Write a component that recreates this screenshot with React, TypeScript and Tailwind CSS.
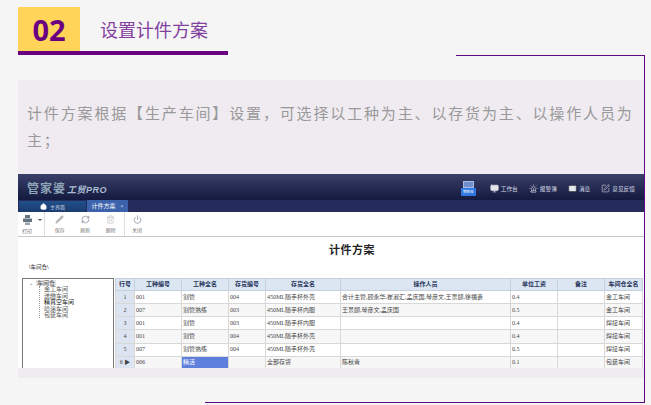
import { Home, Pencil, RefreshCw, Trash2, Power, Monitor, Mail, SquarePen, Siren } from "lucide-react";

const cjk = "font-['Liberation_Sans','Noto_Sans_CJK_SC',sans-serif]";

const rows = [
  ["1", "001", "割管", "004", "450ML随手杯外壳", "合计主管,顾永华,崔淑汇,孟庆国,琴彦文,王景頠,徐福贵", "0.4", "", "金工车间"],
  ["2", "007", "割管熟练", "003", "450ML随手杯内胆", "王景頠,琴彦文,孟庆国", "0.5", "", "金工车间"],
  ["3", "001", "割管", "003", "450ML随手杯内胆", "", "0.4", "", "焊接车间"],
  ["4", "001", "割管", "004", "450ML随手杯外壳", "", "0.4", "", "焊接车间"],
  ["5", "007", "割管熟练", "004", "450ML随手杯外壳", "", "0.5", "", "焊接车间"],
  ["6", "006", "精活", "", "全部存货", "陈秋青", "0.1", "", "包装车间"],
];

const headers = ["行号", "工种编号", "工种全名", "存货编号", "存货全名", "操作人员", "单位工资", "备注", "车间仓全名"];

function PrinterIcon() {
  return (
    <svg width="11" height="10" viewBox="0 0 11 10" fill="#65727f">
      <rect x="3" y="0" width="5" height="3" />
      <rect x="1" y="3.5" width="9" height="3.5" rx="0.5" />
      <rect x="3" y="7.5" width="5" height="2.5" fill="#9aa5af" />
    </svg>
  );
}

function ToolButton({ icon, label, dim, className }: { icon: React.ReactNode; label: string; dim?: boolean; className: string }) {
  return (
    <div className={`flex flex-col items-center gap-[3px] ${className} ${dim ? "text-[#b4b4b4]" : "text-[#5d6b7c]"}`}>
      {icon}
      <span className="text-[5px] leading-[6px] text-[#777]">{label}</span>
    </div>
  );
}

function TopLink({ icon, label }: { icon: React.ReactNode; label: string }) {
  return (
    <div className="flex items-center gap-[2px] text-[#e4e6ee]">
      {icon}
      <span className="text-[5.7px] leading-[8px] text-[#d8dbe6]">{label}</span>
    </div>
  );
}

function AppShot() {
  return (
    <div className="h-[194px] overflow-hidden bg-white">
      <div className="flex h-[26px] items-center justify-between bg-gradient-to-b from-[#3a4069] to-[#14193f] px-[9px] pt-[3px]">
        <div className="flex items-baseline gap-[1px]">
          <span className="text-[12px] font-bold leading-[16px] tracking-[1px] text-[#8fa6b8]">管家婆</span>
          <span className="text-[9px] font-bold italic leading-[12px] tracking-[0.5px] text-[#a9bdd0]">工贸PRO</span>
        </div>
        <div className="flex items-center gap-[11px]">
          <div className="mr-[3px] flex h-[15px] w-[15px] flex-col overflow-hidden rounded-[1px]">
            <div className="mx-[2px] h-[7px] border border-[#a9bee6] bg-[#6f8ecb]" />
            <div className="flex h-[8px] items-center justify-center bg-[#2f77e0] text-[3.5px] leading-[8px] text-white">物联宝</div>
          </div>
          <TopLink icon={<Monitor size={9} fill="#e4e6ee" strokeWidth={1.5} />} label="工作台" />
          <TopLink icon={<Siren size={9} strokeWidth={1.5} />} label="报警簿" />
          <TopLink icon={<Mail size={9} fill="#e4e6ee" stroke="#333" strokeWidth={1.5} />} label="消息" />
          <TopLink icon={<SquarePen size={9} strokeWidth={1.5} />} label="意见反馈" />
        </div>
      </div>

      <div className="flex h-[12px] items-end bg-[#252c5b] pl-[1px]">
        <div className="flex h-[11px] w-[67px] items-center justify-center gap-[3px] bg-gradient-to-b from-[#1f4f8a] to-[#1b3c70] text-white">
          <Home size={7} fill="#fff" />
          <span className="text-[5px] leading-[6px] text-[#c7d2e4]">主界面</span>
        </div>
        <div className="ml-[1px] flex h-[12px] w-[41px] items-center justify-center gap-[5px] bg-[#3d62ac]">
          <span className="text-[6px] leading-[6px] text-white">计件方案</span>
          <span className="text-[5px] leading-[6px] text-[#c3cbe0]">×</span>
        </div>
      </div>

      <div className="flex h-[25px] items-center border-b border-[#c8c8c8] bg-white">
        <div className="flex h-[24px] w-[27px] items-center border-r border-[#ddd]">
          <ToolButton className="w-[18px]" icon={<PrinterIcon />} label="打印" />
          <span className="mb-[8px] ml-[2px] h-0 w-0 border-x-[2px] border-t-[2px] border-x-transparent border-t-[#555]" />
        </div>
        <div className="flex h-[24px] w-[80px] items-center border-r border-[#ddd] pl-[2px]">
          <ToolButton className="w-[25.5px]" dim icon={<Pencil size={9} fill="#bbb" strokeWidth={1.5} />} label="保存" />
          <ToolButton className="w-[25.5px]" icon={<RefreshCw size={9} strokeWidth={1.5} />} label="刷新" />
          <ToolButton className="w-[25.5px]" dim icon={<Trash2 size={9} strokeWidth={1.5} />} label="删除" />
        </div>
        <ToolButton className="w-[24px]" icon={<Power size={9} strokeWidth={1.5} />} label="关闭" />
      </div>

      <div className="pl-[42px] pt-[6px] text-center text-[11px] font-bold leading-[14px] tracking-[0.5px] text-[#222]">计件方案</div>
      <div className="pl-[11px] pt-[6px] text-[5.5px] leading-[8px] text-[#333]">\车间仓\</div>

      <div className="flex gap-[1px] pl-[4px] pt-[7px]">
        <div className="h-[92px] w-[92px] shrink-0 border border-[#777] pl-[6px] pt-[1px] text-[6px] leading-[6.4px] text-[#555]">
          <div className="flex items-center gap-[3px]">
            <span className="text-[5px]">⌄</span>
            <span className="bg-[#e4e4e4] px-[1px]">车间仓</span>
          </div>
          <div className="ml-[10px] border-l border-dotted border-[#999] pl-[4px]">
            <div>金工车间</div>
            <div>送缴车间</div>
            <div className="text-[#111]">精真空车间</div>
            <div>喷涂车间</div>
            <div>包装车间</div>
          </div>
        </div>

        <table className="w-[527px] table-fixed border-collapse font-['Liberation_Serif','Noto_Sans_CJK_SC',serif] text-[6px] leading-[11px] text-[#444]">
          <colgroup>
            <col className="w-[19px]" />
            <col className="w-[47px]" />
            <col className="w-[47px]" />
            <col className="w-[37px]" />
            <col className="w-[75px]" />
            <col className="w-[170px]" />
            <col className="w-[47px]" />
            <col className="w-[47px]" />
            <col className="w-[38px]" />
          </colgroup>
          <thead>
            <tr className="h-[12px] bg-[#dbe6f2]">
              {headers.map((h) => (
                <th key={h} className="border border-[#c6d0dc] p-0 text-center text-[6px] font-bold text-[#26335a]">
                  {h}
                </th>
              ))}
            </tr>
          </thead>
          <tbody>
            {rows.map((row, r) => (
              <tr key={row[0]} className={`h-[12px] ${r % 2 === 1 ? "bg-[#f7f7f7]" : "bg-white"}`}>
                {row.map((cell, c) => (
                  <td
                    key={c}
                    className={`overflow-hidden whitespace-nowrap border border-[#d8d8d8] p-0 ${
                      c === 0 ? "bg-[#dbe4f0] text-center" : "pl-[1px]"
                    } ${r === 5 && c === 2 ? "bg-[#5f7fdc] text-white" : ""}`}
                  >
                    {c === 0 && r === 5 ? "6 ▶" : cell}
                  </td>
                ))}
              </tr>
            ))}
          </tbody>
        </table>
      </div>
    </div>
  );
}

export default function App() {
  return (
    <div className={`relative h-[405px] w-[651px] overflow-hidden bg-[#f5f5f5] pl-[18px] pt-[7px] ${cjk}`}>
      <div className="flex h-[48px] w-[210px] border-b-4 border-[#6a0080]">
        <div className="flex h-[44px] w-[62px] items-center justify-center bg-[#ffd458] font-['Noto_Sans',sans-serif] text-[29px] font-bold leading-none text-[#6a0080]">
          02
        </div>
        <div className="pl-[20px] pt-[12px] text-[18px] leading-[24px] text-[#83409f]">设置计件方案</div>
      </div>

      <div className="mt-[25px] h-[298px] w-[626px] bg-[#efebf1]">
        <p className="px-[9px] pt-[20px] text-[15px] leading-[27px] tracking-[1.85px] text-[#999]">
          计件方案根据【生产车间】设置，可选择以工种为主、以存货为主、以操作人员为主；
        </p>
        <div className="mt-[20px]">
          <AppShot />
        </div>
      </div>

      <div className="absolute left-[205px] top-[55px] h-[348px] w-[440px] border-b border-r border-[#5f0a85]" />
      <div className="absolute left-[456px] top-[55px] h-px w-[189px] bg-[#5f0a85]" />
    </div>
  );
}
